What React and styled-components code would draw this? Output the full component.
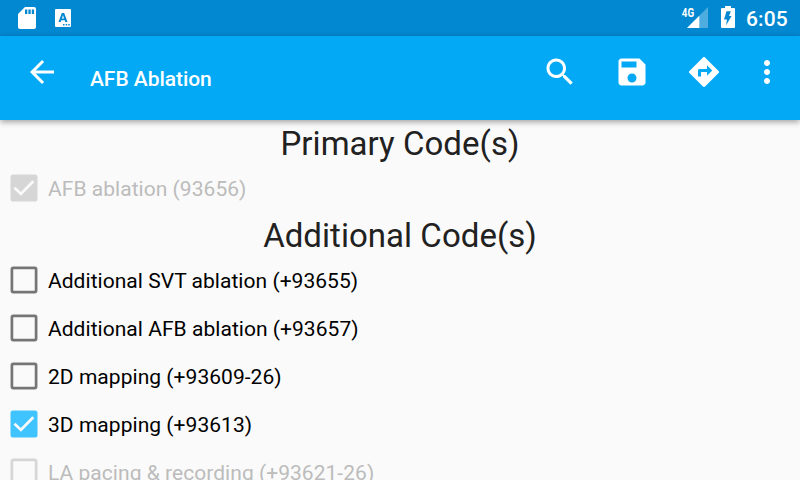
import React from "react";
import styled, { createGlobalStyle } from "styled-components";

const GlobalStyle = createGlobalStyle`
  * { box-sizing: border-box; }
  body {
    margin: 0;
    overflow: hidden;
    background: #fafafa;
    font-family: Roboto, "Liberation Sans", sans-serif;
  }
  svg { display: block; flex: none; }
`;

const Screen = styled.div`
  display: flex;
  flex-direction: column;
  width: 800px;
  height: 480px;
  overflow: hidden;
  background: #fafafa;
`;

const StatusBar = styled.header`
  display: flex;
  flex: none;
  justify-content: space-between;
  height: 36px;
  background: #0288d1;
  color: #fff;
`;

const StatusGroup = styled.div`
  display: flex;
  align-items: flex-start;
`;

const Clock = styled.span`
  width: 54px;
  padding-top: 1px;
  font-size: 21px;
  font-weight: 500;
  letter-spacing: 0.1px;
  line-height: 36px;
  white-space: nowrap;
`;

const AppBar = styled.nav`
  display: flex;
  flex: none;
  height: 84px;
  padding: 0 6px;
  background: #03a9f4;
  color: #fff;
  box-shadow: 0 2px 6px rgba(0, 0, 0, 0.36);
  z-index: 1;
`;

const IconButton = styled.button`
  display: flex;
  align-items: center;
  justify-content: center;
  width: ${({ $width }) => $width || 72}px;
  height: 72px;
  padding: 0;
  border: 0;
  background: none;
  color: inherit;
`;

const Title = styled.h1`
  flex: 1;
  margin: 0 0 0 12px;
  font-size: 21px;
  font-weight: 500;
  letter-spacing: -0.05px;
  line-height: 86px;
  white-space: nowrap;
`;

const Content = styled.main`
  flex: 1;
  min-height: 0;
  overflow: hidden;
`;

const Heading = styled.h2`
  height: 44px;
  margin: 0;
  color: #212121;
  font-size: 33px;
  font-weight: 400;
  letter-spacing: 0.04px;
  line-height: 48px;
  text-align: center;
`;

const Row = styled.div`
  display: flex;
  align-items: center;
  height: 48px;
  padding-left: 6px;
`;

const Label = styled.span`
  margin-left: 6px;
  padding-top: 1px;
  color: ${({ $disabled }) => ($disabled ? "#bcbcbc" : "#000")};
  font-size: 21px;
  letter-spacing: 0.04px;
  line-height: 26px;
  white-space: nowrap;
`;

function Icon({ d }) {
  return (
    <svg width="36" height="36" viewBox="0 0 24 24" fill="currentColor">
      <path d={d} />
    </svg>
  );
}

const icons = {
  back: "M20 11H7.830l5.590-5.590L12 4l-8 8 8 8 1.410-1.410L7.830 13H20v-2z",
  search:
    "M15.5 14h-.79l-.28-.27C15.41 12.59 16 11.11 16 9.5 16 5.91 13.09 3 9.5 3S3 5.91 3 9.5 5.91 16 9.5 16c1.61 0 3.09-.59 4.23-1.57l.27.28v.79l5 4.99L20.49 19l-4.99-5zm-6 0C7.01 14 5 11.99 5 9.5S7.01 5 9.5 5 14 7.01 14 9.5 11.99 14 9.5 14z",
  save: "M17 3H5c-1.11 0-2 .9-2 2v14c0 1.1.89 2 2 2h14c1.1 0 2-.9 2-2V7l-4-4zm-5 16c-1.66 0-3-1.34-3-3s1.34-3 3-3 3 1.34 3 3-1.34 3-3 3zm3-10H5V5h10v4z",
  directions:
    "M21.71 11.29l-9-9c-.39-.39-1.02-.39-1.41 0l-9 9c-.39.39-.39 1.02 0 1.41l9 9c.39.39 1.02.39 1.41 0l9-9c.39-.38.39-1.01 0-1.41zM14 14.5V12h-4v3H8v-4c0-.55.45-1 1-1h5V7.5l3.5 3.5-3.5 3.5z",
  more: "M12 8c1.1 0 2-.9 2-2s-.9-2-2-2-2 .9-2 2 .9 2 2 2zm0 2c-1.1 0-2 .9-2 2s.9 2 2 2 2-.9 2-2-.9-2-2-2zm0 6c-1.1 0-2 .9-2 2s.9 2 2 2 2-.9 2-2-.9-2-2-2z",
};

function SdCardIcon() {
  return (
    <svg width="54" height="36" viewBox="0 0 54 36">
      <path d="M25 7h9q2 0 2 2v18q0 2-2 2H20q-2 0-2-2V14z" fill="#fff" />
      <path d="M25 9.500h2.300v4.500H25zM28.400 9.500h2.300v4.500h-2.300zM31.800 9.500h2.300v4.500h-2.300z" fill="#0288d1" />
    </svg>
  );
}

function KeyboardIcon() {
  return (
    <svg width="18" height="36" viewBox="0 0 18 36">
      <rect x="1" y="9" width="16" height="18" rx="1" fill="#fff" />
      <path
        d="M7.800 13h2.400l3.300 9h-2.200l-.6-1.800H7.300L6.700 22H4.500zM9 15.200l-1.100 3.300h2.200z"
        fill="#0288d1"
        fillRule="evenodd"
      />
      <path d="M9 24h1.500v1.500H9zM11.700 24h1.500v1.500h-1.500zM14.300 24h1.500v1.500h-1.500z" fill="#0288d1" />
    </svg>
  );
}

function SignalIcon() {
  return (
    <svg width="40" height="36" viewBox="0 0 40 36">
      <path d="M28 7v21H7z" fill="#fff" opacity="0.3" />
      <path d="M19.300 15.700V28H7z" fill="#fff" />
      <text
        x="1.800"
        y="16.800"
        fill="#fff"
        fontFamily="Roboto, sans-serif"
        fontSize="12.500"
        fontWeight="700"
        textLength="12.300"
        lengthAdjust="spacingAndGlyphs"
      >
        4G
      </text>
    </svg>
  );
}

function BatteryIcon() {
  return (
    <svg width="26" height="36" viewBox="0 0 26 36">
      <path d="M5 6h6v2h3q1 0 1 1v18q0 1-1 1H2q-1 0-1-1V9q0-1 1-1h3z" fill="#fff" />
      <path d="M6.500 11.200H10.800L9 16h2.600L6 25.500L7 19.500H4z" fill="#0288d1" />
    </svg>
  );
}

function Checkbox({ checked, disabled }) {
  const fill = disabled ? "#d6d6d6" : checked ? "#40c4ff" : "#757575";
  return (
    <svg
      width="36"
      height="36"
      viewBox="0 0 36 36"
      role="checkbox"
      aria-checked={checked}
      aria-disabled={disabled}
    >
      {checked ? (
        <>
          <rect x="4.500" y="4.500" width="27" height="27" rx="2.500" fill={fill} />
          <path d="M8.500 17.800L14.900 23.900L27.300 11.300" fill="none" stroke="#fafafa" strokeWidth="2.800" />
        </>
      ) : (
        <rect x="5.900" y="5.900" width="24.200" height="24.200" rx="1.500" fill="none" stroke={fill} strokeWidth="2.700" />
      )}
    </svg>
  );
}

function CodeRow({ label, checked = false, disabled = false }) {
  return (
    <Row>
      <Checkbox checked={checked} disabled={disabled} />
      <Label $disabled={disabled}>{label}</Label>
    </Row>
  );
}

const additionalCodes = [
  { label: "Additional SVT ablation (+93655)" },
  { label: "Additional AFB ablation (+93657)" },
  { label: "2D mapping (+93609-26)" },
  { label: "3D mapping (+93613)", checked: true },
  { label: "LA pacing & recording (+93621-26)", disabled: true },
];

export default function App() {
  return (
    <>
      <GlobalStyle />
      <Screen>
        <StatusBar>
          <StatusGroup>
            <SdCardIcon />
            <KeyboardIcon />
          </StatusGroup>
          <StatusGroup>
            <SignalIcon />
            <BatteryIcon />
            <Clock>6:05</Clock>
          </StatusGroup>
        </StatusBar>
        <AppBar>
          <IconButton aria-label="Back"><Icon d={icons.back} /></IconButton>
          <Title>AFB Ablation</Title>
          <IconButton aria-label="Search"><Icon d={icons.search} /></IconButton>
          <IconButton aria-label="Save"><Icon d={icons.save} /></IconButton>
          <IconButton aria-label="Directions"><Icon d={icons.directions} /></IconButton>
          <IconButton aria-label="More options" $width={54}><Icon d={icons.more} /></IconButton>
        </AppBar>
        <Content>
          <Heading>Primary Code(s)</Heading>
          <CodeRow label="AFB ablation (93656)" checked disabled />
          <Heading>Additional Code(s)</Heading>
          {additionalCodes.map((code) => (
            <CodeRow key={code.label} {...code} />
          ))}
        </Content>
      </Screen>
    </>
  );
}
